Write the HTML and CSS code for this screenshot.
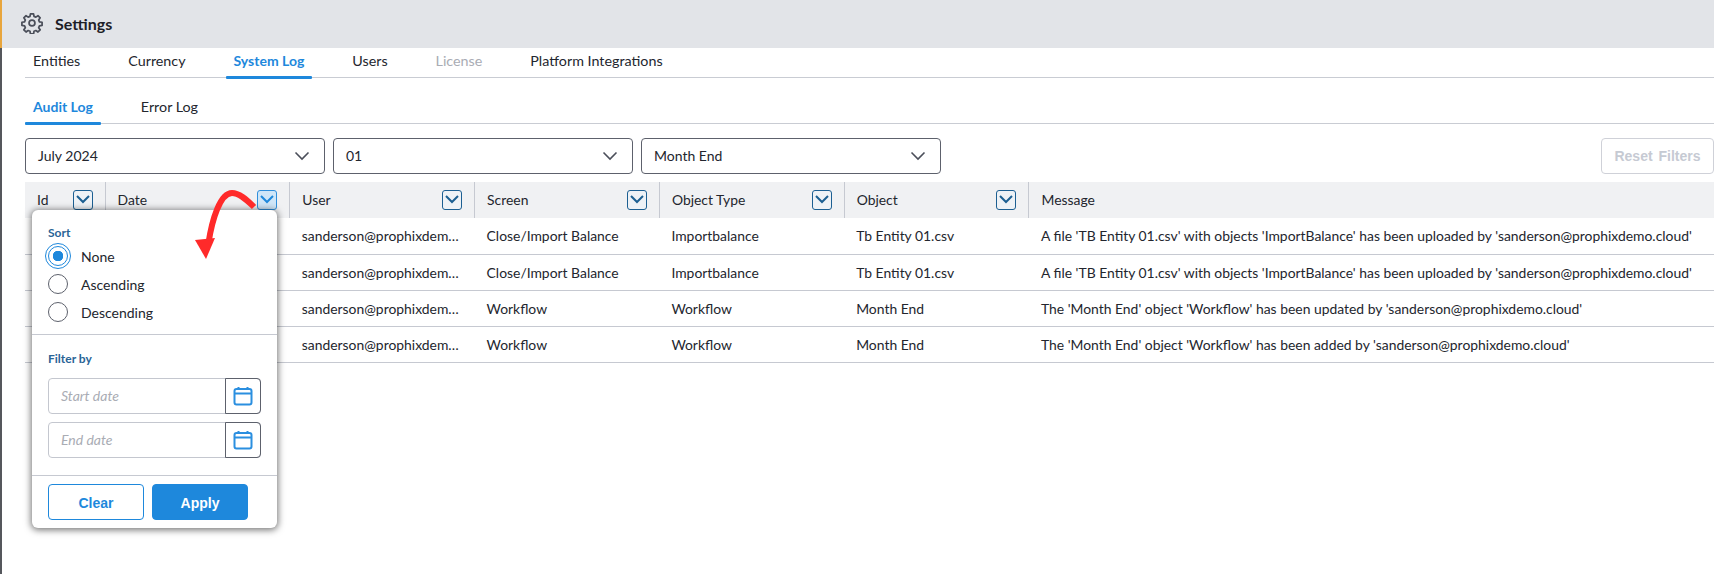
FILE: index.html
```html
<!DOCTYPE html>
<html lang="en">
<head>
    <meta charset="UTF-8">
    <title>Settings</title>
    <link rel="stylesheet" href="styles.css">
</head>
<body>
    <div class="page">
        <header class="topbar">
            <svg class="gear" width="22" height="22" viewBox="0 0 24 24" fill="none" stroke="#4b4f5a" stroke-width="1.900" stroke-linejoin="round">
                <path d="M10.300 2h3.400l.5 2.800 2 .8 2.300-1.600 2.400 2.400-1.600 2.300.8 2 2.900.5v3.400l-2.900.5-.8 2 1.600 2.300-2.400 2.400-2.300-1.600-2 .8-.5 2.900h-3.400l-.5-2.900-2-.8-2.300 1.600-2.400-2.400 1.600-2.300-.8-2-2.900-.5v-3.400l2.900-.5.8-2-1.600-2.300 2.400-2.400 2.300 1.600 2-.8z"/>
                <circle cx="12" cy="12" r="3.200"/>
            </svg>
            <span class="topbar-title">Settings</span>
        </header>

        <nav class="tabs tabs-main">
            <a class="tab">Entities</a>
            <a class="tab">Currency</a>
            <a class="tab active">System Log</a>
            <a class="tab">Users</a>
            <a class="tab disabled">License</a>
            <a class="tab">Platform Integrations</a>
        </nav>

        <nav class="tabs tabs-sub">
            <a class="tab active">Audit Log</a>
            <a class="tab">Error Log</a>
        </nav>

        <div class="filters">
            <div class="select"><span>July 2024</span><svg width="16" height="10" viewBox="0 0 16 10"><path d="M1.500 1.500L8 8l6.500-6.500" fill="none" stroke="#4b4f5a" stroke-width="1.600"/></svg></div>
            <div class="select"><span>01</span><svg width="16" height="10" viewBox="0 0 16 10"><path d="M1.500 1.500L8 8l6.500-6.500" fill="none" stroke="#4b4f5a" stroke-width="1.600"/></svg></div>
            <div class="select"><span>Month End</span><svg width="16" height="10" viewBox="0 0 16 10"><path d="M1.500 1.500L8 8l6.500-6.500" fill="none" stroke="#4b4f5a" stroke-width="1.600"/></svg></div>
            <button class="reset">Reset Filters</button>
        </div>

        <table class="log">
            <thead>
                <tr>
                    <th class="col-id"><div class="th-in"><span>Id</span><i class="fbtn"><svg width="14" height="9" viewBox="0 0 14 9"><path d="M1 1l6 6 6-6" fill="none" stroke="currentColor" stroke-width="2"/></svg></i></div></th>
                    <th class="col"><div class="th-in"><span>Date</span><i class="fbtn open"><svg width="14" height="9" viewBox="0 0 14 9"><path d="M1 1l6 6 6-6" fill="none" stroke="currentColor" stroke-width="2"/></svg></i></div></th>
                    <th class="col"><div class="th-in"><span>User</span><i class="fbtn"><svg width="14" height="9" viewBox="0 0 14 9"><path d="M1 1l6 6 6-6" fill="none" stroke="currentColor" stroke-width="2"/></svg></i></div></th>
                    <th class="col"><div class="th-in"><span>Screen</span><i class="fbtn"><svg width="14" height="9" viewBox="0 0 14 9"><path d="M1 1l6 6 6-6" fill="none" stroke="currentColor" stroke-width="2"/></svg></i></div></th>
                    <th class="col"><div class="th-in"><span>Object Type</span><i class="fbtn"><svg width="14" height="9" viewBox="0 0 14 9"><path d="M1 1l6 6 6-6" fill="none" stroke="currentColor" stroke-width="2"/></svg></i></div></th>
                    <th class="col"><div class="th-in"><span>Object</span><i class="fbtn"><svg width="14" height="9" viewBox="0 0 14 9"><path d="M1 1l6 6 6-6" fill="none" stroke="currentColor" stroke-width="2"/></svg></i></div></th>
                    <th><div class="th-in"><span>Message</span></div></th>
                </tr>
            </thead>
            <tbody>
                <tr><td></td><td></td><td>sanderson@prophixdem&hellip;</td><td>Close/Import Balance</td><td>Importbalance</td><td>Tb Entity 01.csv</td><td>A file 'TB Entity 01.csv' with objects 'ImportBalance' has been uploaded by 'sanderson@prophixdemo.cloud'</td></tr>
                <tr><td></td><td></td><td>sanderson@prophixdem&hellip;</td><td>Close/Import Balance</td><td>Importbalance</td><td>Tb Entity 01.csv</td><td>A file 'TB Entity 01.csv' with objects 'ImportBalance' has been uploaded by 'sanderson@prophixdemo.cloud'</td></tr>
                <tr><td></td><td></td><td>sanderson@prophixdem&hellip;</td><td>Workflow</td><td>Workflow</td><td>Month End</td><td>The 'Month End' object 'Workflow' has been updated by 'sanderson@prophixdemo.cloud'</td></tr>
                <tr><td></td><td></td><td>sanderson@prophixdem&hellip;</td><td>Workflow</td><td>Workflow</td><td>Month End</td><td>The 'Month End' object 'Workflow' has been added by 'sanderson@prophixdemo.cloud'</td></tr>
            </tbody>
        </table>

        <!-- filter popup over the Date column -->
        <div class="popup">
            <div class="popup-sort">
                <div class="popup-label">Sort</div>
                <label class="radio checked"><i></i>None</label>
                <label class="radio"><i></i>Ascending</label>
                <label class="radio"><i></i>Descending</label>
            </div>
            <div class="popup-filter">
                <div class="popup-label">Filter by</div>
                <div class="date"><span>Start date</span><b><svg width="20" height="20" viewBox="0 0 20 20" fill="none" stroke="#2b8fe0" stroke-width="2"><rect x="1.500" y="3" width="17" height="15.500" rx="2"/><path d="M1.500 7.500h17M5.500 1v3M14.500 1v3"/></svg></b></div>
                <div class="date"><span>End date</span><b><svg width="20" height="20" viewBox="0 0 20 20" fill="none" stroke="#2b8fe0" stroke-width="2"><rect x="1.500" y="3" width="17" height="15.500" rx="2"/><path d="M1.500 7.500h17M5.500 1v3M14.500 1v3"/></svg></b></div>
            </div>
            <div class="popup-foot">
                <button class="btn btn-line">Clear</button>
                <button class="btn btn-fill">Apply</button>
            </div>
        </div>

        <svg class="arrow" width="70" height="75" viewBox="0 0 70 75">
            <path d="M62 22C54 14 47 8 40 8C28 8 20 35 16.500 58" fill="none" stroke="#ff2a2a" stroke-width="6"/>
            <path d="M3 55L23 53L14 74z" fill="#ff2a2a"/>
        </svg>
    </div>
</body>
</html>
```

FILE: styles.css
```css
* {
    margin: 0;
    padding: 0;
    box-sizing: border-box;
}

html, body {
    height: 100%;
    overflow: hidden;
}

body {
    background-color: #fff;
    color: #23262e;
    font-family: 'Lato', sans-serif;
    font-size: 14px;
}

.page {
    position: relative;
    height: 574px;
    border-left: 2px solid #55575c;
}

.topbar {
    display: flex;
    align-items: center;
    gap: 12px;
    height: 48px;
    margin-left: -2px;
    padding: 0 0 2px 19px;
    background-color: #e2e4e8;
    border-left: 2px solid #e8a53c;
}

.topbar-title {
    font-size: 16px;
    font-weight: 700;
    color: #1d2027;
}

.tabs {
    display: flex;
    margin-left: 23px;
    border-bottom: 1px solid #c9ccd3;
    font-size: 14.300px;
}

.tab {
    position: relative;
    display: block;
    padding: 0 8px;
    margin-right: 32px;
    white-space: nowrap;
}

.tabs-main {
    height: 30px;
    padding-top: 4px;
}

.tabs-sub {
    height: 32px;
    margin-top: 14px;
    padding-top: 6px;
}

.tab.active {
    color: #1e88dc;
    font-size: 14px;
    font-weight: 700;
}

.tab.active::after {
    content: "";
    position: absolute;
    left: 0;
    right: 0;
    bottom: -2px;
    height: 3px;
    background-color: #1e88dc;
    border-radius: 1px;
}

.tab.disabled {
    color: #a9acb4;
}

.filters {
    display: flex;
    gap: 8px;
    margin: 14px 0 0 23px;
}

.select {
    display: flex;
    align-items: center;
    justify-content: space-between;
    width: 300px;
    height: 36px;
    padding: 0 14px 1px 12px;
    border: 1px solid #5d616c;
    border-radius: 4px;
}

.reset {
    width: 113px;
    height: 36px;
    margin-left: auto;
    border: 1px solid #cfd1d8;
    border-radius: 4px;
    background-color: #fff;
    color: #c6cad3;
    font-family: 'Liberation Sans', sans-serif;
    font-size: 14px;
    font-weight: 700;
    word-spacing: 2px;
}

.log {
    width: 1689px;
    margin: 8px 0 0 23px;
    border-collapse: collapse;
    table-layout: fixed;
    font-size: 13.900px;
}

.log th {
    height: 36px;
    background-color: #f0f1f3;
    font-weight: 400;
    text-align: left;
    border-right: 1px solid #c6c9d1;
}

.log th:last-child {
    border-right: none;
    width: auto;
}

.col-id {
    width: 80px;
}

.col {
    width: 184.800px;
}

.th-in {
    display: flex;
    align-items: center;
    justify-content: space-between;
    padding: 0 12px 2px;
}

.fbtn {
    display: flex;
    align-items: center;
    justify-content: center;
    width: 20px;
    height: 20px;
    margin-top: 1px;
    border: 1px solid #1c5f92;
    border-radius: 3px;
    background-color: #eef2f6;
    color: #1c5f92;
}

.fbtn.open {
    border-color: #2f8fdc;
    background-color: #cfe6f8;
    color: #1e88dc;
}

.log td {
    height: 36px;
    padding: 0 12px;
    border-bottom: 1px solid #c6c9d1;
    white-space: nowrap;
}

.popup {
    position: absolute;
    left: 30px;
    top: 210px;
    width: 245px;
    height: 318px;
    background-color: #fff;
    border-radius: 6px;
    box-shadow: 0 1px 7px 1px rgba(0, 0, 0, 0.55);
}

.popup-sort {
    height: 125px;
    padding: 16px 16px 0;
    border-bottom: 1px solid #c6c9d1;
}

.popup-label {
    font-size: 12px;
    font-weight: 700;
    color: #2a6496;
    line-height: 14px;
}

.popup-sort .popup-label {
    margin-bottom: 2px;
}

.radio {
    display: flex;
    align-items: center;
    gap: 13px;
    height: 28px;
}

.radio i {
    width: 20px;
    height: 20px;
    border: 1px solid #5d616c;
    border-radius: 50%;
}

.radio.checked i {
    border-color: #1e88dc;
    background: radial-gradient(circle, #1e88dc 0 5px, #fff 5.500px);
    outline: 1px solid #1e88dc;
    outline-offset: 2px;
}

.popup-filter {
    height: 141px;
    padding: 17px 16px 0;
    border-bottom: 1px solid #c6c9d1;
}

.date {
    display: flex;
    height: 36px;
    margin-top: 8px;
    border: 1px solid #c4c7cf;
    border-radius: 4px;
    align-items: center;
    justify-content: space-between;
    padding: 0 0 2px 12px;
    color: #a9acb4;
    font-style: italic;
}

.popup-label + .date {
    margin-top: 12px;
}

.date b {
    display: flex;
    align-items: center;
    justify-content: center;
    width: 36px;
    height: 36px;
    margin: 1px -1px -1px;
    border: 1px solid #5d616c;
    border-radius: 0 4px 4px 0;
}

.popup-foot {
    display: flex;
    gap: 8px;
    padding: 8px 16px;
}

.btn {
    width: 96px;
    height: 36px;
    padding-top: 1px;
    border: 1px solid #1e88dc;
    border-radius: 4px;
    font-family: 'Liberation Sans', sans-serif;
    font-size: 14px;
    font-weight: 700;
}

.btn-line {
    background-color: #fff;
    color: #1e88dc;
}

.btn-fill {
    background-color: #1e88dc;
    color: #fff;
}

.arrow {
    position: absolute;
    left: 190px;
    top: 185px;
}
```
